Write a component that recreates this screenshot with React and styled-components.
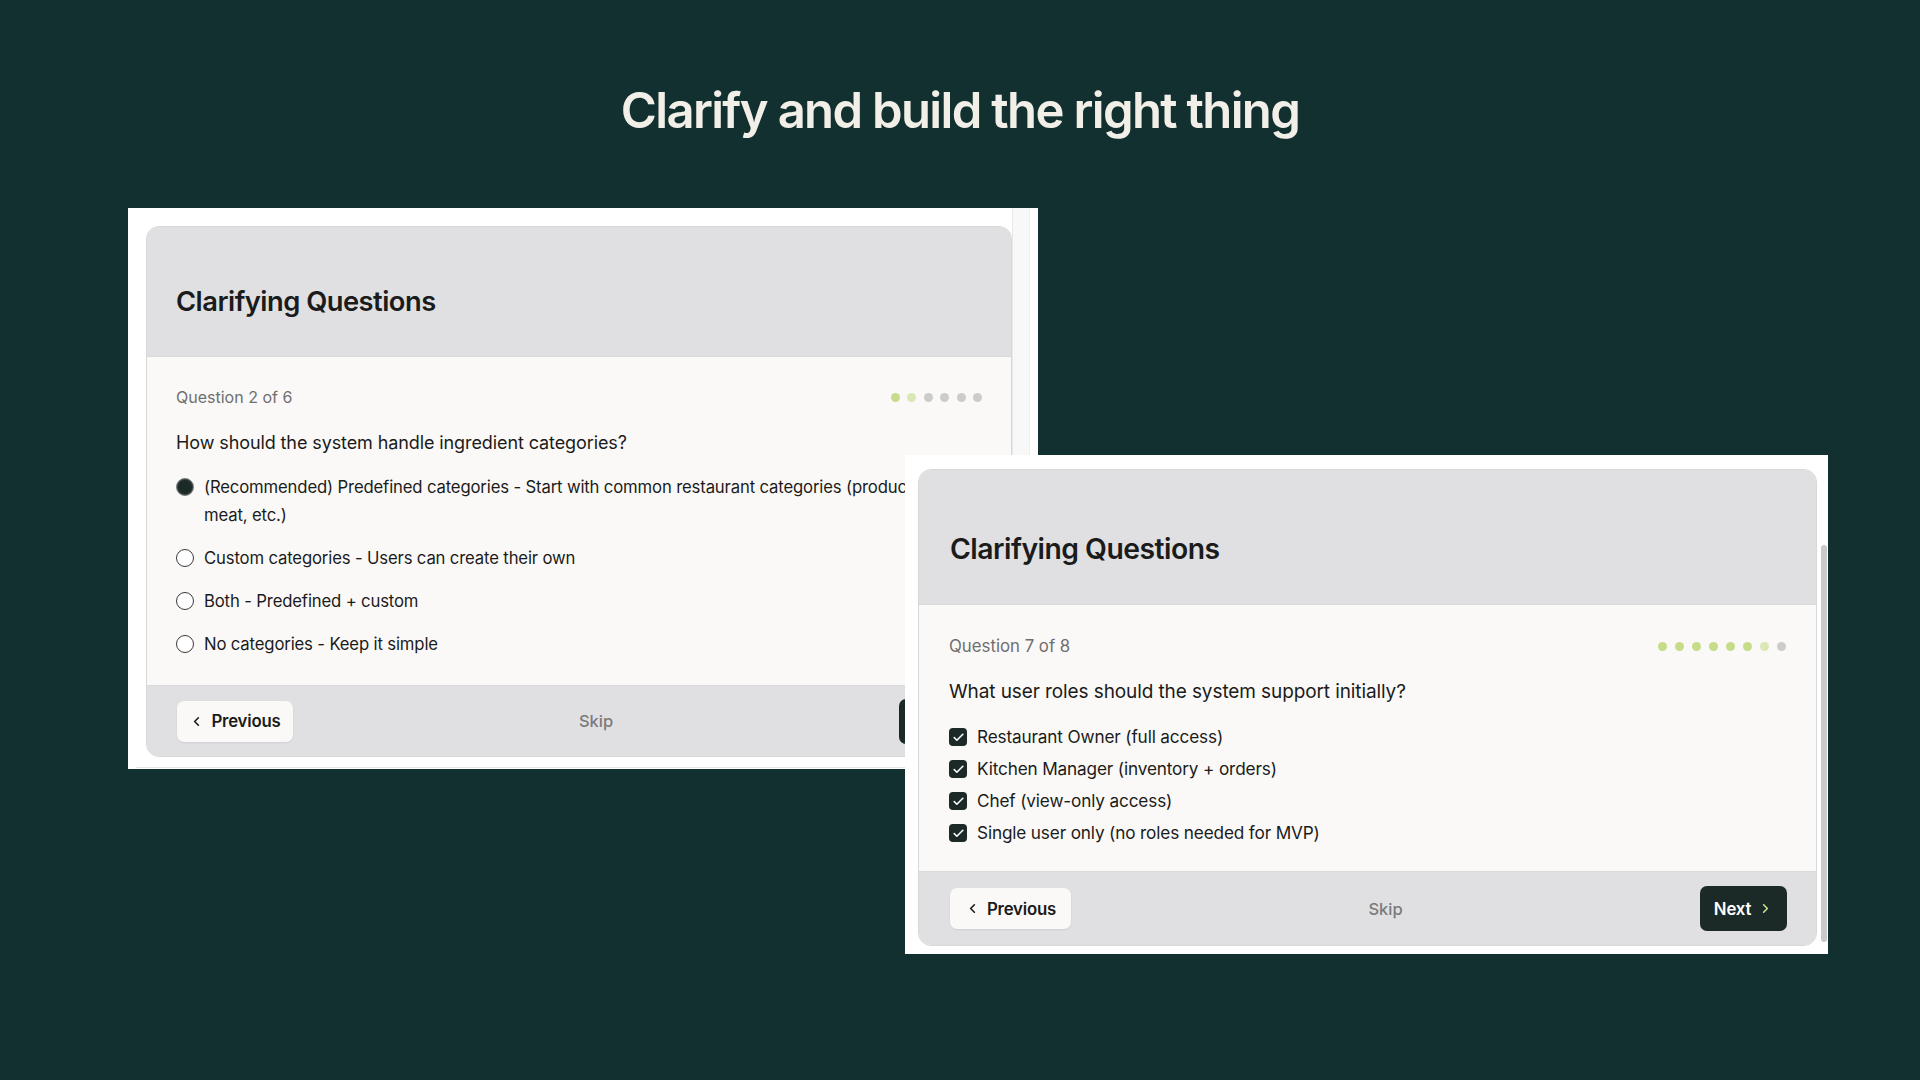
import React from 'react';
import styled, {createGlobalStyle} from 'styled-components';
import {ChevronLeft, ChevronRight, Check} from 'lucide-react';


const colours = {
  BG: '#12302f',
  CREAM: '#f2efe8',
  PANEL: '#e0e0e2',
  BODY: '#faf9f7',
  INK: '#1b1b1b',
  DARK: '#1b2927',
  MUTED: '#6f6f6f',
  GREEN: '#c7dc88',
  DOT: '#cccccc',
};

const GlobalStyle = createGlobalStyle`
  body {
    margin: 0;
    background: ${colours.BG};
  }
`;

const Page = styled.div`
  width: 1920px;
  height: 1080px;
  overflow: hidden;
  background: ${colours.BG};
  font-family: Inter, "Noto Sans", sans-serif;
  color: ${colours.INK};
`;

const Heading = styled.h1`
  margin: 0;
  padding-top: 81px;
  height: 60px;
  line-height: 60px;
  text-align: center;
  font-size: 49px;
  font-weight: 600;
  letter-spacing: -1.65px;
  color: ${colours.CREAM};
`;

// both screenshots share one grid cell and overlap like windows
const Stage = styled.div`
  display: grid;
  margin-top: 67px;

  & > * {
    grid-area: 1 / 1;
  }
`;

const Shot = styled.div`
  justify-self: start;
  align-self: start;
  margin-left: ${p => p.$x}px;
  margin-top: ${p => p.$y}px;
  width: ${p => p.$w}px;
  height: ${p => p.$h}px;
  box-sizing: border-box;
  padding-left: ${p => p.$padLeft}px;
  background: #ffffff;
  display: flex;
  overflow: hidden;
`;

const CardSlot = styled.div`
  padding-top: ${p => p.$padTop}px;
  display: flex;
  flex-direction: column;
`;

const BottomRule = styled.div`
  margin-top: 10px;
  margin-left: -10px;
  height: 1px;
  background: #e6e6e6;
`;

const Track = styled.div`
  width: 16px;
  flex-shrink: 0;
  background: #f8f8f8;
  border-left: 1px solid #e8e8e8;
  border-right: 1px solid #efefef;
`;

const ScrollLane = styled.div`
  width: 6px;
  margin-left: 4px;
  padding-top: 90px;
  padding-bottom: 12px;
  display: flex;
`;

const Thumb = styled.div`
  flex: 1;
  background: #cacaca;
  border-radius: 3px;
`;

const Card = styled.div`
  width: ${p => p.$w}px;
  height: ${p => p.$h}px;
  box-sizing: border-box;
  border: 1px solid #d8d8d8;
  border-radius: 13px;
  overflow: hidden;
  display: flex;
  flex-direction: column;
  background: ${colours.BODY};
  flex-shrink: 0;
`;

const CardHeader = styled.div`
  height: ${p => p.$h}px;
  flex-shrink: 0;
  box-sizing: border-box;
  background: ${colours.PANEL};
  border-bottom: 1px solid #d9d9d9;
  display: flex;
  align-items: flex-end;
  padding: 0 ${p => p.$pad}px ${p => p.$padBottom}px;
`;

const CardTitle = styled.h2`
  margin: 0;
  font-size: ${p => p.$size}px;
  line-height: 34px;
  font-weight: 600;
  letter-spacing: -0.5px;
  color: ${colours.INK};
`;

const CardBody = styled.div`
  flex: 1;
  padding: ${p => p.$padTop}px ${p => p.$pad}px 0;
  white-space: nowrap;
`;

const MetaRow = styled.div`
  display: flex;
  justify-content: space-between;
  align-items: center;
  height: 24px;
`;

const Counter = styled.span`
  font-size: ${p => p.$size}px;
  color: ${colours.MUTED};
`;

const Dots = styled.div`
  display: flex;
  gap: ${p => p.$gap}px;
`;

const Dot = styled.span`
  width: 9px;
  height: 9px;
  border-radius: 50%;
  background: ${p => (p.$state === 'off' ? colours.DOT : colours.GREEN)};
  opacity: ${p => (p.$state === 'current' ? 0.6 : 1)};
`;

const Question = styled.p`
  margin: 20px 0 0;
  font-size: ${p => p.$size}px;
  line-height: 28px;
  letter-spacing: -0.1px;
  color: ${colours.INK};
`;

const OptionList = styled.div`
  margin-top: ${p => p.$top}px;
  display: flex;
  flex-direction: column;
  gap: ${p => p.$gap}px;
`;

const Option = styled.label`
  display: flex;
  align-items: flex-start;
  gap: 10px;
  font-size: ${p => p.$size}px;
  line-height: ${p => p.$lh}px;
  letter-spacing: -0.15px;
  color: ${colours.INK};
  white-space: normal;
`;

const OptionText = styled.span`
  width: ${p => p.$w}px;
`;

const Radio = styled.span`
  width: 18px;
  height: 18px;
  margin-top: 5px;
  flex-shrink: 0;
  box-sizing: border-box;
  border-radius: 50%;
  border: 1.5px solid ${p => (p.$on ? '#7d8280' : '#3a3a3a')};
  background: ${p => (p.$on ? colours.DARK : '#ffffff')};
  box-shadow: ${p => (p.$on ? 'inset 0 0 0 1px #3a4341' : 'none')};
`;

const Box = styled.span`
  width: 18px;
  height: 18px;
  margin-top: 3px;
  flex-shrink: 0;
  border-radius: 4px;
  background: ${colours.DARK};
  color: #ffffff;
  display: flex;
  align-items: center;
  justify-content: center;
`;

const CardFooter = styled.div`
  height: ${p => p.$h}px;
  flex-shrink: 0;
  box-sizing: border-box;
  background: ${colours.PANEL};
  border-top: 1px solid #dadada;
  padding: 0 ${p => p.$padRight}px 0 ${p => p.$pad}px;
  display: flex;
  justify-content: space-between;
  align-items: center;
`;

const Button = styled.button`
  height: ${p => (p.$primary ? 45 : 41)}px;
  width: ${p => p.$w}px;
  box-sizing: border-box;
  padding: 0;
  border: none;
  border-radius: 7px;
  display: flex;
  align-items: center;
  justify-content: center;
  gap: 7px;
  font-family: inherit;
  font-size: 16.8px;
  font-weight: 600;
  letter-spacing: -0.2px;
  background: ${p => (p.$primary ? colours.DARK : colours.BODY)};
  color: ${p => (p.$primary ? '#ffffff' : colours.INK)};
  box-shadow: ${p => (p.$primary ? 'none' : '0 1px 2px rgba(0,0,0,0.08)')};

  svg {
    color: ${p => (p.$primary ? '#cfe08f' : colours.INK)};
  }
`;

const SkipLink = styled.span`
  font-size: 16.5px;
  font-weight: 500;
  color: #7a7a7a;
`;


const dotStates = (total, current) =>
  Array.from({length: total}, (_, i) =>
    i < current - 1 ? 'done' : i === current - 1 ? 'current' : 'off');

const Footer = ({h, pad, padRight, prevW}) => (
  <CardFooter $h={h} $pad={pad} $padRight={padRight}>
    <Button $w={prevW}>
      <ChevronLeft size={15} strokeWidth={2.6}/>
      Previous
    </Button>
    <SkipLink>Skip</SkipLink>
    <Button $primary $w={87}>
      Next
      <ChevronRight size={15} strokeWidth={2.6}/>
    </Button>
  </CardFooter>
);

const radioOptions = [
  '(Recommended) Predefined categories - Start with common restaurant categories (produce, dairy, meat, etc.)',
  'Custom categories - Users can create their own',
  'Both - Predefined + custom',
  'No categories - Keep it simple',
];

const roleOptions = [
  'Restaurant Owner (full access)',
  'Kitchen Manager (inventory + orders)',
  'Chef (view-only access)',
  'Single user only (no roles needed for MVP)',
];

const SingleChoiceCard = () => (
  <Card $w={866} $h={531}>
    <CardHeader $h={130} $pad={29} $padBottom={37}>
      <CardTitle $size={27.3}>Clarifying Questions</CardTitle>
    </CardHeader>
    <CardBody $padTop={28} $pad={29}>
      <MetaRow>
        <Counter $size={16}>Question 2 of 6</Counter>
        <Dots $gap={7.5}>
          {dotStates(6, 2).map((s, i) => <Dot key={i} $state={s}/>)}
        </Dots>
      </MetaRow>
      <Question $size={18}>How should the system handle ingredient categories?</Question>
      <OptionList $top={16} $gap={15}>
        {radioOptions.map((text, i) => (
          <Option key={i} $lh={28} $size={16.7}>
            <Radio $on={i === 0}/>
            <OptionText $w={790}>{text}</OptionText>
          </Option>
        ))}
      </OptionList>
    </CardBody>
    <Footer h={71} pad={30} padRight={25} prevW={116}/>
  </Card>
);

const MultiChoiceCard = () => (
  <Card $w={899} $h={477}>
    <CardHeader $h={135} $pad={31} $padBottom={38}>
      <CardTitle $size={28.3}>Clarifying Questions</CardTitle>
    </CardHeader>
    <CardBody $padTop={29} $pad={30}>
      <MetaRow>
        <Counter $size={16.8}>Question 7 of 8</Counter>
        <Dots $gap={8}>
          {dotStates(8, 7).map((s, i) => <Dot key={i} $state={s}/>)}
        </Dots>
      </MetaRow>
      <Question $size={19}>What user roles should the system support initially?</Question>
      <OptionList $top={19} $gap={8}>
        {roleOptions.map((text, i) => (
          <Option key={i} $lh={24} $size={17.2}>
            <Box><Check size={13} strokeWidth={3}/></Box>
            <span>{text}</span>
          </Option>
        ))}
      </OptionList>
    </CardBody>
    <Footer h={74} pad={31} padRight={29} prevW={121}/>
  </Card>
);

const App = () => {
  return (
    <Page>
      <GlobalStyle/>
      <Heading>Clarify and build the right thing</Heading>
      <Stage>
        <Shot $x={128} $y={0} $w={910} $h={561} $padLeft={18}>
          <CardSlot $padTop={18}>
            <SingleChoiceCard/>
            <BottomRule/>
          </CardSlot>
          <Track/>
        </Shot>
        <Shot $x={905} $y={247} $w={923} $h={499} $padLeft={13}>
          <CardSlot $padTop={14}>
            <MultiChoiceCard/>
          </CardSlot>
          <ScrollLane>
            <Thumb/>
          </ScrollLane>
        </Shot>
      </Stage>
    </Page>
  );
}


export default App;
